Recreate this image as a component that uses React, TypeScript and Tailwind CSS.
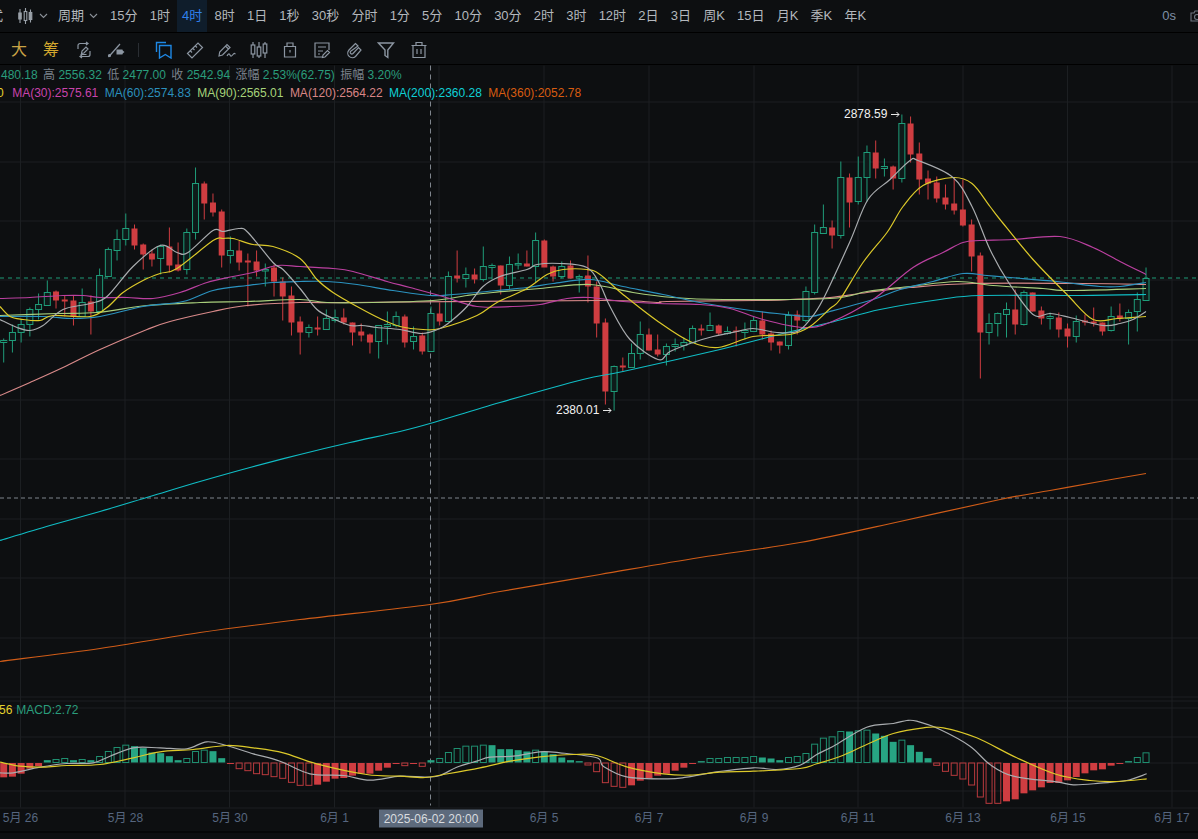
import React from "react";

const FONT = { fontFamily: '"Liberation Sans","Noto Sans CJK SC",sans-serif' };
const X = (i: number) => 3.7 + 8.72 * i;
const RED = "#cf3d41";
const GREEN = "#1f9c79";

// [up, wickTop, wickBottom, bodyTop, bodyBottom]
const C: [number, number, number, number, number][] = [
[1,339,363,341,343],[1,325,353,333,341],[1,320,343,325,333],[1,308,337,310,325],[1,294,320,305,310],[1,281,306,293,306],[0,291,309,292,301],[0,296,317,300,302],[0,296,326,301,317],[1,289,317,303,317],
[0,296,335,302,312],[1,269,312,276,312],[1,248,277,250,277],[1,230,261,240,251],[1,214,246,229,240],[0,225,250,229,246],[0,244,270,245,255],[0,250,267,254,260],[1,245,275,247,259],[0,228,273,247,266],
[0,243,272,265,271],[1,229,275,233,270],[1,168,240,184,233],[0,182,220,184,204],[0,194,217,203,213],[0,210,268,212,256],[1,237,264,251,256],[0,241,271,251,263],[0,254,307,261,263],[0,251,277,262,271],
[1,264,287,270,271],[0,265,297,268,282],[0,278,321,282,297],[0,287,336,296,323],[0,317,355,322,333],[1,325,338,328,333],[0,317,336,328,330],[1,310,330,319,330],[1,310,323,318,321],[0,309,325,318,323],
[0,323,346,323,333],[0,324,342,332,336],[0,334,354,335,343],[1,326,359,326,342],[1,312,345,325,327],[1,312,328,317,326],[0,315,348,317,343],[1,327,350,337,342],[0,333,355,336,352],[1,307,352,314,352],
[0,303,326,314,322],[1,272,322,277,322],[0,251,283,276,279],[1,268,288,275,279],[0,269,284,275,280],[1,247,282,267,280],[1,264,280,266,268],[0,266,295,266,286],[1,257,290,265,286],[1,254,270,264,265],
[0,251,267,264,267],[1,233,283,241,267],[0,240,267,241,268],[0,266,282,267,277],[1,262,279,267,277],[0,261,279,266,279],[1,275,293,277,278],[0,256,303,276,287],[0,282,338,287,324],[0,319,405,323,392],
[1,366,411,367,392],[0,358,372,366,368],[1,344,368,354,368],[1,322,360,335,354],[0,329,351,335,351],[0,335,357,350,355],[1,344,366,347,355],[1,339,352,345,347],[1,338,351,343,346],[1,326,344,329,343],
[0,325,336,329,331],[1,313,331,326,331],[0,325,336,326,334],[1,327,335,332,334],[0,327,347,331,332],[1,323,340,331,333],[1,317,332,321,332],[0,312,340,321,335],[0,331,351,334,343],[0,342,354,342,346],
[1,312,350,316,346],[0,311,335,315,321],[1,287,323,292,321],[1,225,295,233,293],[1,205,234,228,234],[0,221,249,228,236],[1,162,239,178,236],[0,174,228,178,203],[1,157,205,178,202],[1,146,202,153,178],
[0,141,179,153,169],[1,159,177,167,169],[0,166,190,167,179],[1,115,183,124,179],[0,117,163,124,155],[0,143,195,154,180],[0,171,200,179,184],[0,177,203,183,199],[0,185,210,198,205],[0,179,215,204,211],
[0,180,227,210,226],[0,220,272,225,257],[0,253,379,256,333],[1,314,345,324,333],[1,313,337,314,324],[1,303,338,310,315],[0,290,335,310,325],[1,291,326,293,325],[0,293,312,293,312],[0,307,325,311,319],
[1,313,330,317,319],[0,313,338,318,330],[0,324,348,329,337],[1,316,343,322,337],[0,315,326,321,323],[0,308,327,322,324],[0,323,336,323,332],[1,307,332,317,331],[0,304,322,316,319],[1,310,345,313,319],
[1,293,332,300,312],[1,268,301,279,301],
];

// signed height in zoomed pixels (neg = up), h=hollow
const M: [number, number][] = [
[43,0],[41,0],[32,0],[17,0],[9,0],[-7,0],[-9,1],[-12,1],[-7,0],[-9,1],[-7,0],[-18,1],[-33,1],[-45,1],[-52,1],[-49,0],[-43,0],[-30,0],[-28,0],[-19,0],
[-7,0],[-12,1],[-33,1],[-37,1],[-34,0],[-13,0],[2,0],[17,1],[23,1],[32,1],[35,1],[41,1],[46,1],[58,1],[67,1],[67,1],[65,0],[56,0],[47,0],[45,0],
[38,0],[32,0],[32,0],[23,0],[14,0],[3,0],[8,1],[3,0],[10,1],[-7,0],[-12,1],[-30,1],[-42,1],[-49,1],[-49,1],[-52,1],[-52,0],[-40,0],[-40,0],[-37,0],
[-33,0],[-37,1],[-33,0],[-25,0],[-15,0],[-7,0],[-4,0],[6,1],[26,1],[59,1],[70,1],[73,1],[67,0],[53,0],[45,0],[38,0],[32,0],[23,0],[14,0],[3,0],
[-4,0],[-12,1],[-12,1],[-15,1],[-15,1],[-15,1],[-18,1],[-15,0],[-12,0],[-7,0],[-15,1],[-18,1],[-27,1],[-55,1],[-73,1],[-77,1],[-93,1],[-93,0],[-95,1],[-97,1],
[-87,0],[-80,0],[-62,0],[-67,1],[-52,0],[-32,0],[-13,0],[7,1],[25,1],[37,1],[48,1],[66,1],[102,1],[121,1],[121,1],[115,0],[109,0],[91,0],[82,0],[73,0],
[60,0],[60,0],[52,0],[42,0],[31,0],[22,0],[19,0],[8,0],[3,0],[-4,0],[-15,1],[-29,1],
];

const WHITE_MA = "0,320 17,328 30,331 43,326 63,310 90,304 107,297 133,267 160,246 177,253 188,253 213,231 223,232 239,229 248,233 273,263 283,270 300,289 317,310 333,319 350,326 362,326 377,328 400,330 422,334 440,329 453,320 467,307 483,287 500,277 527,270 537,265 560,264 587,268 600,285 610,307 630,340 658,360 670,352 693,343 713,337 737,332 753,329 777,333 797,332 810,320 823,300 850,242 868,200 890,180 910,161 918,161 953,178 972,207 990,250 1008,282 1033,315 1050,314 1070,318 1103,326 1120,324 1133,320 1146,312";
const YELLOW_MA = "0,307 10,317 23,320 40,321 53,316 90,317 107,308 123,293 143,281 160,274 177,269 213,241 223,239 233,239 253,245 273,247 300,259 317,280 333,293 357,307 380,319 400,327 423,330 440,329 477,316 497,303 527,289 547,275 563,270 587,270 600,275 623,295 658,322 690,342 718,348 753,337 790,335 810,327 830,309 840,300 863,263 887,233 903,207 923,186 953,178 972,184 990,207 1000,220 1033,260 1067,295 1093,320 1117,319 1146,317";
const PINK_MA = "0,299 30,298 63,296 83,296 100,298 127,298 153,299 180,293 207,283 233,277 253,273 277,266 300,267 333,269 353,272 387,282 410,288 443,297 477,307 513,307 540,305 567,299 590,298 623,302 657,304 700,305 730,309 763,320 803,328 830,323 873,300 913,268 943,253 963,243 980,241 1013,240 1060,237 1093,248 1120,262 1146,275";
const BLUE_MA = "0,317 43,317 73,319 100,317 143,307 183,302 213,291 247,286 273,283 300,282 327,282 357,285 393,291 430,296 453,295 487,292 527,288 553,284 590,280 623,287 663,295 700,303 737,309 777,314 810,317 830,312 873,300 900,290 933,282 963,274 987,276 1010,278 1057,282 1100,287 1120,287 1146,283";
const LIME_MA = "0,316 57,314 97,313 147,306 200,303 247,302 300,300 327,303 373,303 433,301 467,296 493,293 540,289 590,285 633,293 673,298 723,300 830,299 867,292 910,287 957,282 993,286 1043,289 1070,291 1146,289";
const SALMON_MA = "0,396 30,383 63,368 100,350 147,330 170,322 213,312 247,306 300,303 350,303 600,301 657,303 667,302 757,301 790,300 830,298 867,293 910,288 973,284 1083,284 1146,285";
const CYAN_MA = "0,541 50,526 100,512 150,497 200,482 250,468 300,455 350,443 400,432 430,424 500,403 583,380 623,372 720,350 787,333 830,323 880,310 940,300 980,296 1080,296 1146,295";
const ORANGE_MA = "0,662 100,649 200,633 300,620 430,605 500,592 600,575 700,558 800,543 900,522 1000,500 1050,491 1100,482 1146,474";

const z = (pts: number[][], ox: number) => pts.map(([x, y]) => `${ox + x / 3},${695 + y / 3}`).join(" ");
const MW = [z([[0,235],[40,235],[120,218],[200,207],[280,205],[330,185],[400,160],[480,160],[560,163],[620,142],[680,153],[760,178],[840,200],[930,238],[1030,243],[1110,257],[1200,245]],0),
  z([[75,248],[120,243],[170,218],[230,200],[270,188],[340,185],[420,172],[480,175],[590,190],[610,215],[680,247],[800,253],[860,248],[950,232],[1060,220],[1130,225],[1200,212]],400),
  z([[50,180],[100,155],[200,98],[280,87],[320,78],[350,80],[420,105],[510,155],[570,210],[640,245],[770,262],[820,271],[900,266],[980,258],[1040,238]],800)].join(" ");
const MY = [z([[0,203],[60,215],[130,218],[200,213],[300,210],[400,190],[480,172],[580,165],[680,153],[760,160],[850,175],[950,208],[1100,240],[1200,245]],0),
  z([[75,249],[130,240],[240,220],[330,200],[420,187],[520,180],[590,183],[680,217],[790,238],[870,242],[960,233],[1060,230],[1200,222]],400),
  z([[50,208],[130,182],[200,150],[280,117],[370,100],[430,100],[530,130],[650,190],[770,240],[870,258],[950,261],[1040,253]],800)].join(" ");

// Catmull-Rom through the read points, so the averages curve as they do in the chart
function smooth(s: string) {
  const p = s.split(" ").map((q) => q.split(",").map(Number));
  let d = `M${p[0][0]} ${p[0][1]}`;
  for (let i = 0; i < p.length - 1; i++) {
    const a = p[Math.max(i - 1, 0)];
    const b = p[i];
    const c = p[i + 1];
    const e = p[Math.min(i + 2, p.length - 1)];
    const c1x = b[0] + (c[0] - a[0]) / 6;
    const c1y = b[1] + (c[1] - a[1]) / 6;
    const c2x = c[0] - (e[0] - b[0]) / 6;
    const c2y = c[1] - (e[1] - b[1]) / 6;
    d += `C${c1x.toFixed(1)} ${c1y.toFixed(1)} ${c2x.toFixed(1)} ${c2y.toFixed(1)} ${c[0].toFixed(1)} ${c[1].toFixed(1)}`;
  }
  return d;
}

const HG = [102,162,221,280,340,400,459,519,578,638,697,701,708,737,763,791,808];
const VG = [20.5,125,229.5,334.5,439,544,649,754,858,963,1067.5,1172];
const DATES: [number, string][] = [[20.5,"5月 26"],[125.5,"5月 28"],[230,"5月 30"],[334.5,"6月 1"],[544,"6月 5"],[649,"6月 7"],[754,"6月 9"],[858,"6月 11"],[963,"6月 13"],[1068,"6月 15"],[1172,"6月 17"]];

const PERIODS = ["15分","1时","4时","8时","1日","1秒","30秒","分时","1分","5分","10分","30分","2时","3时","12时","2日","3日","周K","15日","月K","季K","年K"];

function Chev() {
  return <svg width="9" height="6" viewBox="0 0 9 6" fill="none" stroke="#8a9098" strokeWidth="1.1"><path d="M1 1l3.5 3.5L8 1" /></svg>;
}

function Ic({ children, w = 18, className = "" }: { children: React.ReactNode; w?: number; className?: string }) {
  return <svg width={w} height="18" viewBox={`0 0 ${w} 18`} fill="none" stroke="#8c96a2" strokeWidth="1.2" className={className}>{children}</svg>;
}

function Legend({ c, children }: { c: string; children: React.ReactNode }) {
  return <span className={c}>{children}</span>;
}

export default function App() {
  return (
    <div className="flex h-[839px] w-[1198px] flex-col overflow-hidden bg-[#0d0f11] text-[13px] text-[#b4b8bd]" style={FONT}>
      <div className="flex h-[33px] shrink-0 items-center border-b border-black">
        <span className="-ml-[10px] w-[28px] text-[#b4b8bd]">式</span>
        <svg width="15" height="16" viewBox="0 0 15 16" fill="none" stroke="#9aa1a9" strokeWidth="1.1">
          <path d="M2 1v14M7.500 0v16M12.500 1.500v13" />
          <rect x="0.800" y="5" width="2.400" height="6" fill="#9aa1a9" />
          <rect x="6.200" y="3.500" width="2.600" height="9" fill="#0d0f11" />
          <rect x="11.200" y="4.500" width="2.600" height="7" fill="#9aa1a9" />
        </svg>
        <span className="ml-[6px] mr-[10px]"><Chev /></span>
        <span>周期</span>
        <span className="ml-[5px] mr-[12px]"><Chev /></span>
        <div className="flex items-center gap-[12.200px]">
          {PERIODS.map((p) =>
            p === "4时" ? (
              <span key={p} className="-mx-[5px] flex h-[32px] items-center bg-[#0f1d2b] px-[5px] text-[#2f80ed]">{p}</span>
            ) : (
              <span key={p}>{p}</span>
            )
          )}
        </div>
        <span className="ml-auto text-[#7f8fa6]">0s</span>
        <svg width="14" height="14" viewBox="0 0 14 14" fill="none" stroke="#6d7580" strokeWidth="1.1" className="ml-[14px] mr-[-6px] shrink-0">
          <path d="M1 4h3l1-2h4l1 2h3v8H1z" /><circle cx="7" cy="8" r="2.500" />
        </svg>
      </div>

      <div className="flex h-[32px] shrink-0 items-center border-b border-black pl-[11px] pt-[2px]">
        <span className="w-[32px] text-[16px] text-[#c9a345]">大</span>
        <span className="w-[32px] text-[16px] text-[#d4a82e]">筹</span>
        <Ic className="mr-[14px]">
          <path d="M3 8V4.500a2 2 0 0 1 2-2h7M15 10v3.500a2 2 0 0 1-2 2H6" />
          <path d="M11 1l2 1.500L11 4M7 14l-2 1.500L7 17" />
          <path d="M6.500 12.500l.5-2.500 4-4 2 2-4 4zM5.500 13.500h6" />
        </Ic>
        <Ic className="mr-[13px]">
          <path d="M1.500 16L13 3" /><circle cx="2.500" cy="14.500" r="1" fill="#8c96a2" />
          <rect x="9.500" y="8.500" width="6" height="5" fill="#8c96a2" stroke="none" />
          <path d="M15 9l2.500 2-2.500 2z" fill="#8c96a2" stroke="none" />
        </Ic>
        <span className="mr-[16px] h-[14px] w-px bg-[#2a2e33]" />
        <Ic className="mr-[13px]">
          <path d="M1.500 11V1.500H11" stroke="#1e88e5" strokeWidth="1.400" />
          <path d="M4.500 4.500h11.500v12.500l-5.700-3.500L4.500 17z" stroke="#1e88e5" strokeWidth="1.400" />
        </Ic>
        <Ic className="mr-[13px]">
          <path d="M1.500 12.500L12 2l4.500 4.500L6 17zM4.500 10l1.500 1.500M7 7.500l1.500 1.500M9.500 5L11 6.500" />
        </Ic>
        <Ic w={20} className="mr-[13px]">
          <path d="M2 15l.7-4L10 3.500l3 3L5.500 14zM8.500 5l3 3" />
          <path d="M10 15c1.500-3 2.500-2.500 3-1s1.500 1.500 3-.5 1.800-.8 2.500-.5" />
        </Ic>
        <Ic className="mr-[13px]">
          <path d="M3 1v16M9 1v16M15 1v16" />
          <rect x="1.200" y="4" width="3.600" height="9" fill="#0d0f11" />
          <rect x="7.200" y="6" width="3.600" height="9" fill="#0d0f11" />
          <rect x="13.200" y="3" width="3.600" height="9" fill="#0d0f11" />
        </Ic>
        <Ic className="mr-[14px]">
          <path d="M3.500 5.500h11v10.500h-11zM6 5.500V2h6v3.500M9 9v2.500" />
        </Ic>
        <Ic className="mr-[14px]">
          <path d="M16 9V2H2v14h7M5 6h8M5 10h5M5 13h2" />
          <path d="M9.500 16.500l.5-2.500 4.500-4.500 2 2-4.500 4.500z" />
        </Ic>
        <Ic className="mr-[14px]">
          <path d="M10.500 2.500L4 9a4.600 4.600 0 0 0 6.500 6.500L16 9l-2.500-2.500L8 12.500a1.300 1.300 0 0 1-2.300-2.300L13 5z" />
        </Ic>
        <Ic className="mr-[15px]">
          <path d="M1.500 2h15l-5.700 7v7.500l-2.800-2V9z" strokeWidth="1.400" />
        </Ic>
        <Ic>
          <path d="M1.500 4.500h15M6 4.500V1.500h6v3M3 4.500V16.500h12V4.500M7 8v5M11 8v5" />
        </Ic>
      </div>

      <div className="relative min-h-0 flex-1">
        <svg viewBox="0 66 1198 773" className="block h-full w-full">
          {HG.map((y) => <line key={y} x1="0" x2="1198" y1={y + 0.5} y2={y + 0.5} stroke="#1c1f22" />)}
          {VG.map((x) => <line key={x} x1={x} x2={x} y1="66" y2="808" stroke="#1c1f22" />)}
          <line x1="0" x2="1198" y1="832.500" y2="832.500" stroke="#000" />

          <line x1="0" x2="1198" y1="278.500" y2="278.500" stroke="#1f9c79" strokeDasharray="4 4" />
          <line x1="0" x2="1198" y1="498.500" y2="498.500" stroke="#7f858d" strokeDasharray="4 3" />
          <line x1="430.500" x2="430.500" y1="66" y2="806" stroke="#7f858d" strokeDasharray="5 4" />

          {C.map(([up, wt, wb, bt, bb], i) => {
            const x = X(i);
            const col = up ? GREEN : RED;
            return (
              <g key={i}>
                <line x1={x} x2={x} y1={wt} y2={wb} stroke={col} />
                <rect
                  x={x - 3}
                  y={bt}
                  width="6"
                  height={Math.max(bb - bt, 1.500)}
                  fill={up ? "#0e1b1a" : col}
                  stroke={up ? col : "none"}
                />
              </g>
            );
          })}

          {[
            [ORANGE_MA, "#cf5c18"],
            [CYAN_MA, "#10bcc4"],
            [SALMON_MA, "#d98a8a"],
            [LIME_MA, "#a9cf7c"],
            [BLUE_MA, "#2b92bf"],
            [PINK_MA, "#bb40a0"],
            [YELLOW_MA, "#dcc92a"],
            [WHITE_MA, "#a9acaf"],
          ].map(([pts, col]) => (
            <path key={col} d={smooth(pts)} fill="none" stroke={col} strokeWidth="1.200" strokeLinejoin="round" />
          ))}

          {M.map(([h, hollow], i) => {
            const x = X(i);
            const px = Math.abs(h) / 3;
            const up = h < 0;
            const col = up ? "#27a583" : RED;
            const y = up ? 763 - px : 763.500;
            return hollow ? (
              <rect key={i} x={x - 3} y={y} width="6" height={px} fill="none" stroke={up ? "#1f8f70" : "#b93a3e"} />
            ) : (
              <rect key={i} x={x - 3.500} y={y} width="7" height={Math.max(px, 1)} fill={col} />
            );
          })}
          <path d={smooth(MW)} fill="none" stroke="#a9acaf" strokeWidth="1.200" />
          <path d={smooth(MY)} fill="none" stroke="#dcc92a" strokeWidth="1.200" />

          <rect x="379" y="810" width="104" height="18" fill="#5d6a7c" />
          {DATES.map(([x, t]) => (
            <text key={t} x={x} y="822" textAnchor="middle" fontSize="12" fill="#56667f">{t}</text>
          ))}
          <text x="431" y="823" textAnchor="middle" fontSize="12" fill="#d8dbdf">2025-06-02 20:00</text>

          <text x="844" y="118" fontSize="12" fill="#f2f2f2">2878.59</text>
          <path d="M891 115h8M896.500 112.500l2.500 2.500-2.500 2.500" fill="none" stroke="#e8e8e8" strokeWidth="1" />
          <text x="556" y="414" fontSize="12" fill="#f2f2f2">2380.01</text>
          <path d="M603 411h8M608.500 408.500l2.500 2.500-2.500 2.500" fill="none" stroke="#e8e8e8" strokeWidth="1" />
        </svg>

        <div className="absolute left-[1px] top-[3px] flex gap-[5.400px] whitespace-pre text-[12px] leading-[14px] text-[#7b828c]">
          <Legend c="text-[#2a9d7c]">480.18</Legend>
          <span>高 <Legend c="text-[#2a9d7c]">2556.32</Legend></span>
          <span>低 <Legend c="text-[#2a9d7c]">2477.00</Legend></span>
          <span>收 <Legend c="text-[#2a9d7c]">2542.94</Legend></span>
          <span>涨幅 <Legend c="text-[#2a9d7c]">2.53%(62.75)</Legend></span>
          <span>振幅 <Legend c="text-[#2a9d7c]">3.20%</Legend></span>
        </div>
        <div className="absolute left-0 top-[21px] flex gap-[6.500px] whitespace-pre text-[12px] leading-[14px]">
          <span className="-ml-[3px] text-[#e6d22c]">0</span>
          <Legend c="ml-[2px] text-[#c844ac]">MA(30):2575.61</Legend>
          <Legend c="text-[#2b8fbd]">MA(60):2574.83</Legend>
          <Legend c="text-[#a6d37a]">MA(90):2565.01</Legend>
          <Legend c="text-[#d98585]">MA(120):2564.22</Legend>
          <Legend c="text-[#0fd0d6]">MA(200):2360.28</Legend>
          <Legend c="text-[#d85c10]">MA(360):2052.78</Legend>
        </div>
        <div className="absolute -left-[1px] top-[638px] flex gap-[4px] text-[12px] leading-[14px]">
          <span className="text-[#e6d22c]">56</span>
          <span className="text-[#2a9d7c]">MACD:2.72</span>
        </div>
      </div>
    </div>
  );
}
